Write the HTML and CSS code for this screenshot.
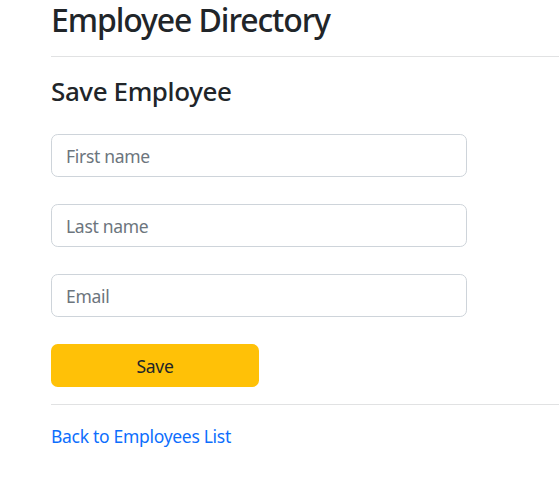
FILE: index.html
```html
<!DOCTYPE html>
<html lang="en">
<head>
<meta charset="utf-8">
<title>Employee Directory</title>
<link rel="stylesheet" href="styles.css">
</head>
<body>
<main class="page">
  <h1 class="title">Employee Directory</h1>
  <hr class="rule">
  <h3 class="subtitle">Save Employee</h3>
  <form class="form">
    <input class="field" type="text" placeholder="First name">
    <input class="field" type="text" placeholder="Last name">
    <input class="field" type="email" placeholder="Email">
    <button class="btn-save" type="button">Save</button>
  </form>
  <hr class="rule rule-bottom">
  <a class="back" href="#">Back to Employees List</a>
</main>
</body>
</html>
```
FILE: styles.css
```css
html, body {
  margin: 0;
  padding: 0;
  background: #fff;
}
body {
  font-family: "Noto Sans", "Open Sans", sans-serif;
  color: #212529;
  font-size: 17.5px;
  letter-spacing: -0.3px;
  line-height: 1.5;
  overflow: hidden;
}
.page {
  padding-left: 51px;
}
.title {
  margin: 0;
  font-size: 32px;
  letter-spacing: -1.1px;
  line-height: 40px;
  font-weight: 500;
}
.rule {
  margin: 16px 0 18px 0;
  border: 0;
  border-top: 1px solid #e1e2e3;
  height: 0;
}
.subtitle {
  margin: 0;
  font-size: 26px;
  letter-spacing: -0.4px;
  line-height: 32px;
  font-weight: 500;
}
.form {
  display: flex;
  flex-direction: column;
  align-items: flex-start;
  gap: 27px;
  margin-top: 27px;
}
.field {
  box-sizing: border-box;
  width: 416px;
  height: 43px;
  padding: 0 14px;
  border: 1px solid #ced4da;
  border-radius: 6.75px;
  font-family: inherit;
  font-size: 17.5px;
  letter-spacing: -0.3px;
  color: #212529;
  background: #fff;
  outline: none;
}
.field::placeholder {
  color: #6c757d;
}
.btn-save {
  box-sizing: border-box;
  width: 208px;
  height: 43px;
  border: 0;
  border-radius: 6.75px;
  background: #ffc107;
  color: #212529;
  font-family: inherit;
  font-size: 17.5px;
  letter-spacing: -0.3px;
}
.rule-bottom {
  margin: 17px 0 18px 0;
}
.back {
  display: inline-block;
  color: #0d6efd;
  text-decoration: none;
  line-height: 27px;
}
```
